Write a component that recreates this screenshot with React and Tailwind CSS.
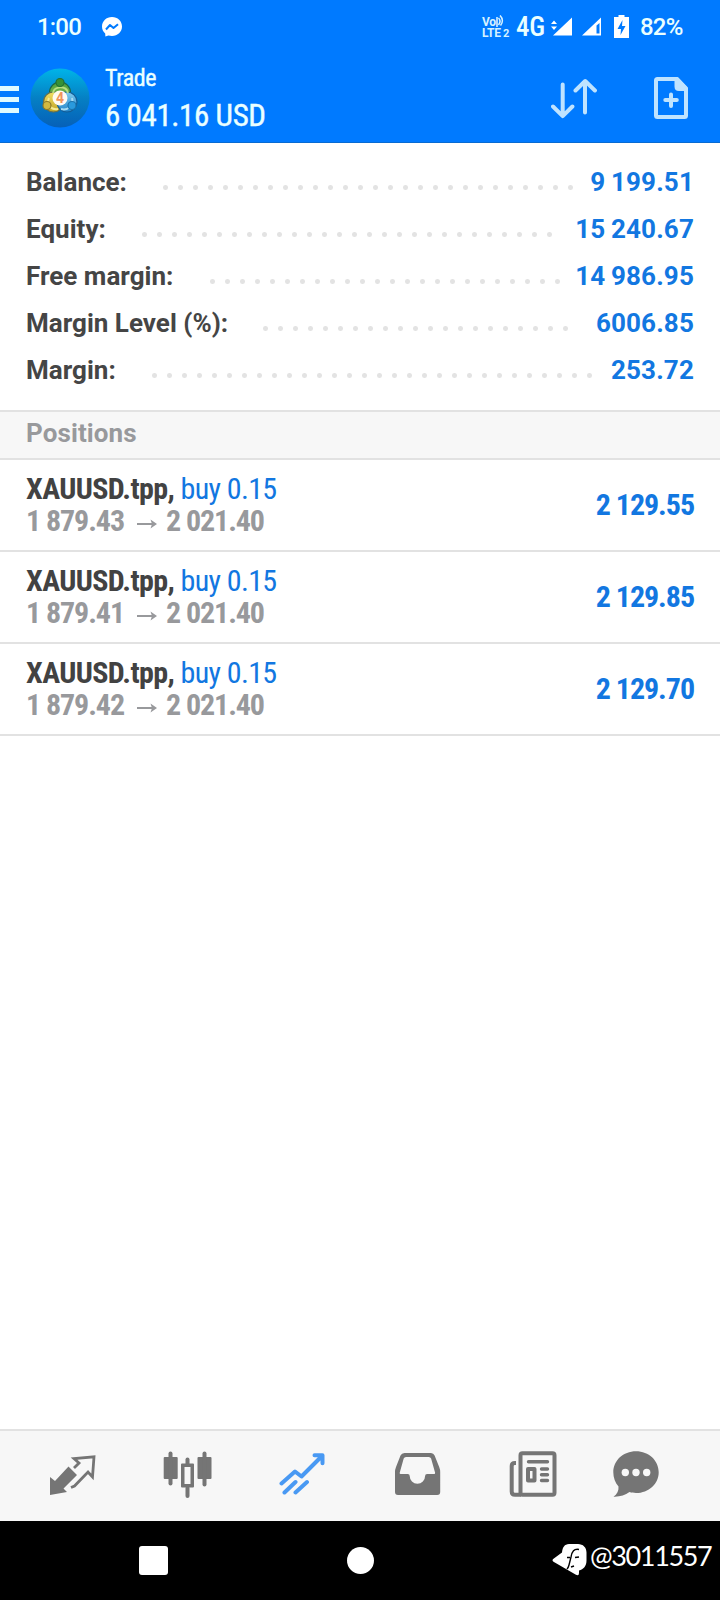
const summary = [
  { label: 'Balance:', value: '9 199.51', start: 'left-[163px]', width: 'w-[410px]' },
  { label: 'Equity:', value: '15 240.67', start: 'left-[142px]', width: 'w-[410px]' },
  { label: 'Free margin:', value: '14 986.95', start: 'left-[210px]', width: 'w-[350px]' },
  { label: 'Margin Level (%):', value: '6006.85', start: 'left-[263px]', width: 'w-[305px]' },
  { label: 'Margin:', value: '253.72', start: 'left-[152px]', width: 'w-[440px]' },
];

const positions = [
  { open: '1 879.43', now: '2 021.40', profit: '2 129.55' },
  { open: '1 879.41', now: '2 021.40', profit: '2 129.85' },
  { open: '1 879.42', now: '2 021.40', profit: '2 129.70' },
];

function StatusBar() {
  return (
    <div className="flex h-[54px] items-center pl-[37px] text-[24px] leading-none text-[#eaffff]">
      <span className="w-[65px] font-medium tracking-[-0.8px]">1:00</span>
      <svg className="h-[20px] w-[20px]" viewBox="0 0 20 20">
        <path d="M10 0C4.3 0 0 4.1 0 9.6c0 2.9 1.2 5.2 3.2 7l.2 3 3-1.2c1.1.3 2.300.5 3.600.5 5.700 0 10-4 10-9.400S15.700 0 10 0Z" fill="#fff" />
        <path d="M4 12.500 8 8l3.500 3L16 7.200" fill="none" stroke="#007aff" strokeWidth="2" strokeLinejoin="round" />
      </svg>
      <div className="ml-[360px] flex h-[24px] w-[28px] flex-col text-[#d5f2ff]">
        <div className="flex h-[13px] items-start">
          <span className="w-[14px] pt-[1px] text-[12px] font-bold leading-[12px] tracking-[-0.3px]">Vo</span>
          <svg className="h-[12px] w-[8px]" viewBox="0 0 8 12" fill="none" stroke="currentColor" strokeWidth="1.600">
            <path d="M1 2v10M2.500 3c2 2 2 4.500 0 7M4 0.500c3 3 3 7 .5 10" />
          </svg>
        </div>
        <div className="flex h-[11px] items-center whitespace-nowrap font-bold leading-[11px]">
          <span className="w-[21px] text-[12px] tracking-[-0.2px]">LTE</span>
          <span className="text-[11px]">2</span>
        </div>
      </div>
      <span className="ml-[6px] w-[34px] text-[27px] font-medium tracking-[-0.3px] font-stretch-75%">4G</span>
      <svg className="ml-px h-[24px] w-[112px]" viewBox="551 15 112 24" fill="#fff">
        <path d="M554 20.500l3 3.500h-6zM554 30l3-3.500h-6zM572 17.500v18h-19z" />
        <path fillRule="evenodd" d="M601 17.500v18h-19zM599.500 23v10.500h-3V25.500z" />
        <path d="M618.500 14h6v3h4.500v21h-15V17h4.500z" />
        <path d="M622.500 20l-5 9h3.500l-.5 6 5-9H622z" fill="#007aff" />
      </svg>
      <span className="absolute left-[640px] font-medium tracking-[-0.8px]">82%</span>
    </div>
  );
}

function Logo() {
  return (
    <svg className="h-[60px] w-[60px]" viewBox="0 0 60 60">
      <defs>
        <linearGradient id="disc" x2="0" y2="1"><stop stopColor="#00b4e8" /><stop offset=".5" stopColor="#0580c4" /><stop offset="1" stopColor="#0660b8" /></linearGradient>
        <linearGradient id="green" x2="0" y2="1"><stop stopColor="#4b9c36" /><stop offset="1" stopColor="#91ca62" /></linearGradient>
        <linearGradient id="yellow" x2="0" y2="1"><stop stopColor="#f1de64" /><stop offset="1" stopColor="#c2a527" /></linearGradient>
        <linearGradient id="blue" x2="0" y2="1"><stop stopColor="#80ccef" /><stop offset="1" stopColor="#2485ca" /></linearGradient>
      </defs>
      <circle cx="30" cy="30" r="29.500" fill="url(#disc)" />
      <g strokeWidth="1.200">
        <circle cx="30" cy="24.500" r="10.500" fill="url(#green)" stroke="#1d6544" />
        <circle cx="23.500" cy="34" r="10" fill="url(#yellow)" stroke="#6c7048" />
        <circle cx="37" cy="34" r="10" fill="url(#blue)" stroke="#145c96" />
        <path d="M23 25c1-7 13-8 15 0" fill="none" stroke="#b7df82" strokeWidth="2" />
        <path d="M19 30c-3 7 2 12 9 11" fill="none" stroke="#f5eb96" strokeWidth="2" />
        <path d="M31 41c7 2 13-4 11-11" fill="none" stroke="#a8dbf2" strokeWidth="2" />
        <circle cx="30" cy="14.500" r="4" fill="#369137" stroke="#237034" />
        <circle cx="17" cy="37.500" r="4" fill="#d2b840" stroke="#8d7a29" />
        <circle cx="42" cy="37.500" r="4" fill="#2a9add" stroke="#1b73ac" />
      </g>
      <circle cx="30" cy="30" r="7.500" fill="#fffaf2" />
      <text x="30" y="35" textAnchor="middle" fontSize="14" fontWeight="700" fill="#ef955b">4</text>
    </svg>
  );
}

function Header() {
  return (
    <header className="relative h-[143px] border-b border-[#086bd2] bg-[#007aff]">
      <StatusBar />
      <div className="flex h-[88px] items-start text-[#eaffff]">
        <div className="mt-[32px] flex w-[30px] flex-col gap-[6px]">
          {[0, 1, 2].map((i) => <span key={i} className="h-[5px] w-[19px] bg-[#dffaff]" />)}
        </div>
        <div className="mt-[14px] w-[75px]"><Logo /></div>
        <div className="flex w-[446px] flex-col whitespace-nowrap font-stretch-75%">
          <span className="mt-[10px] text-[24px] leading-[28px] tracking-[-0.4px] [-webkit-text-stroke:0.4px_#eaffff]">Trade</span>
          <span className="mt-[6px] text-[31px] leading-[36px] tracking-[-0.4px] [-webkit-text-stroke:0.4px_#eaffff]">6 041.16 USD</span>
        </div>
        <svg className="mt-[24px] h-[42px] w-[46px]" viewBox="551 77 46 42" fill="none" stroke="#bfe3ff" strokeWidth="4" strokeLinecap="round" strokeLinejoin="round">
          <path d="M562.700 83.500v31.500M553 105.500l9.700 9.700 9.700-9.700M585 111.500V80.500M575.500 89.500l9.700-9.500 9.700 9.500" />
        </svg>
        <svg className="ml-[57px] mt-[23px] h-[42px] w-[36px]" viewBox="654 77 36 42" fill="none" stroke="#bfe3ff" strokeWidth="4" strokeLinecap="round" strokeLinejoin="round">
          <path d="M657.500 79H677l9 9.500V115.500Q686 117 684.500 117H657.500Q656 117 656 115.500V80.500Q656 79 657.500 79Z" />
          <path d="M676.500 79v7.500q0 2.500 2.500 2.500h7z" fill="#bfe3ff" />
          <path d="M671 94.500v11.500M665.300 100h11.500" strokeWidth="4" />
        </svg>
      </div>
    </header>
  );
}

function Summary() {
  return (
    <section className="h-[267px] pt-[16px] text-[26px] font-bold">
      {summary.map((row) => (
        <div key={row.label} className="relative flex h-[47px] items-center justify-between px-[26px]">
          <span className="tracking-[0.02px] text-[#454545]">{row.label}</span>
          <span className={`absolute top-[26px] h-[5px] bg-[radial-gradient(circle_at_2.5px_2.5px,#e3e3e3_2px,transparent_3px)] bg-[length:15px_5px] bg-repeat-x ${row.start} ${row.width}`} />
          <span className="tracking-[0.15px] text-[#1277e1] [word-spacing:-1px]">{row.value}</span>
        </div>
      ))}
    </section>
  );
}

function PositionRow({ row }) {
  return (
    <div className="flex h-[92px] items-center justify-between border-b-2 border-[#e2e2e2] px-[26px] text-[30px] font-bold font-stretch-75%">
      <div className="flex flex-col leading-[32px]">
        <div className="tracking-[-0.62px] text-[#424242]">XAUUSD.tpp, <span className="font-normal text-[#1277e1]">buy 0.15</span></div>
        <div className="flex text-[#98999c]">
          <span className="tracking-[-1.08px]">{row.open}</span>
          <svg className="ml-[13px] mr-[9px] mt-[14px] h-[10px] w-[20px]" viewBox="0 0 20 10" fill="none" stroke="currentColor" strokeWidth="2"><path d="M0 5h17" /><path d="M13.500 0.500 20 5l-6.500 4.500L15 5z" fill="currentColor" stroke="none" /></svg>
          <span className="tracking-[-1.08px]">{row.now}</span>
        </div>
      </div>
      <span className="pb-[2px] tracking-[-1.05px] text-[#1277e1]">{row.profit}</span>
    </div>
  );
}

function TabBar() {
  return (
    <nav className="flex h-[92px] items-start border-t-2 border-[#e2e2e2] bg-[#f7f7f7] pl-[49px] pt-[20px]">
      <svg className="h-[46px] w-[48px]" viewBox="49 1451 48 46">
        <path d="M68.500 1466.500 77 1475l-13.500 13.500 3.500 3.500L50 1495v-18l5 4z" fill="#757575" />
        <path d="M71 1487.500l3.500-1.500 13.500-14 4.500 5L94 1456.800 74 1458.500l5 4.500-5 5" fill="none" stroke="#757575" strokeWidth="2.800" />
      </svg>
      <svg className="ml-[66px] h-[48px] w-[50px]" viewBox="163 1451 50 48" fill="#757575">
        <rect x="163.700" y="1457" width="14" height="22" rx="1" /><rect x="168.500" y="1451.500" width="4" height="34" rx="2" />
        <rect x="197.500" y="1457" width="14" height="22" rx="1" /><rect x="202.500" y="1451.500" width="4" height="35" rx="2" />
        <path fillRule="evenodd" d="M182 1463.500h11q1 0 1 1v22q0 1-1 1h-11q-1 0-1-1v-22q0-1 1-1Zm2.500 3.500v17h6v-17z" />
        <rect x="185.500" y="1457.500" width="4" height="8" rx="2" /><rect x="185.500" y="1486" width="4" height="12" rx="2" />
      </svg>
      <svg className="ml-[66px] h-[46px] w-[48px]" viewBox="279 1451 48 46" fill="none" stroke="#4999f3" strokeWidth="4" strokeLinecap="round" strokeLinejoin="round">
        <path d="M281.500 1483.500 295 1471.500l6.500 5L322 1456M314.500 1455.300h8v8M284.500 1492.500l11-10.500M295.500 1492.500l11.500-10.500" />
      </svg>
      <svg className="ml-[68px] h-[46px] w-[46px]" viewBox="395 1451 46 46" fill="#757575">
        <path fillRule="evenodd" d="M404.500 1453h26.500q2.500 0 3.600 2.500l4.600 11.500q1 2.500 1 5V1492q0 3-3 3H398q-3 0-3-3v-20q0-2.500 1-5l4.500-11.500q1.200-2.500 4-2.500Zm1.500 4q-1.700 0-2.300 1.500l-4 14.300q-.3 1.200 1 1.200h7q2 0 2 2a7.700 7.700 0 0 0 15.400 0q0-2 2-2h7q1.300 0 1-1.200l-4-14.300q-.7-1.500-2.300-1.500z" />
      </svg>
      <svg className="ml-[68px] h-[48px] w-[48px]" viewBox="509 1451 48 48" fill="none" stroke="#757575" strokeWidth="4">
        <rect x="520.500" y="1453.300" width="34" height="41.500" rx="2" />
        <path d="M516 1463h-1q-3.300 0-3.300 3v25.500q0 3.300 3.300 3.300h6" strokeLinejoin="round" />
        <g strokeWidth="3.400" strokeLinecap="round"><path d="M528.500 1461.700h19M541.500 1469h6M541.500 1474.700h6M541.500 1480.500h6" /></g>
        <rect x="528" y="1469" width="6.500" height="11.500" strokeLinejoin="round" />
      </svg>
      <svg className="ml-[56px] h-[48px] w-[46px]" viewBox="613 1451 46 48">
        <path d="M636 1451.300c12.800 0 22.700 9.300 22.700 20.900S648.800 1493 636 1493c-2.300 0-4.500-.2-6.500-.9-4.500 3.400-9.500 4.800-16 4.600 3.600-2.600 5.400-5.800 5-10.200-3.300-3.900-5.200-8.800-5.200-14.300 0-11.600 9.900-20.900 22.700-20.900Z" fill="#757575" />
        <g fill="#f7f7f7"><circle cx="625.300" cy="1472.500" r="3.700" /><circle cx="636" cy="1472.500" r="3.700" /><circle cx="646.700" cy="1472.500" r="3.700" /></g>
      </svg>
    </nav>
  );
}

function SystemNav() {
  return (
    <div className="flex h-[79px] items-start bg-black pl-[139px] pt-[17px]">
      <span className="mt-[8px] h-[29px] w-[29px] rounded-[3px] bg-white" />
      <span className="ml-[179px] mt-[9px] h-[27px] w-[27px] rounded-full bg-white" />
      <svg className="ml-[178px] mt-[5px] h-[34px] w-[36px]" viewBox="552 1543 36 34">
        <path d="M569 1544h9c5 0 8.500 3.500 8.500 8.500v8c0 5.500-3 9-7.500 10v2.500q0 3.500-3.500 1.500l-22-12.800q-2-1.500 0-3l8.500-6.200c.5-5 2.500-8.500 7-8.500Z" fill="#fff" />
        <path d="M579 1549.500c-5-1-7 2-8 7.500l-2 8c-.5 2-1 3-2 4M567 1557.500h3M575 1557.500l4-.5M571 1567l3-1" fill="none" stroke="#000" strokeWidth="1.400" />
      </svg>
      <span className="ml-[2px] mt-[2px] whitespace-nowrap font-['Lato',sans-serif] text-[27px] leading-[32px] tracking-[-1.350px] text-white">@3011557</span>
    </div>
  );
}

export default function App() {
  return (
    <main className="flex h-[1600px] w-[720px] flex-col overflow-hidden bg-white font-['Roboto',sans-serif]">
      <Header />
      <Summary />
      <section>
        <h2 className="flex h-[50px] items-center border-y-2 border-[#e2e2e2] bg-[#f7f7f7] px-[26px] pb-[4px] text-[26px] font-bold tracking-[0.1px] text-[#98999c]">Positions</h2>
        {positions.map((row) => <PositionRow key={row.open} row={row} />)}
      </section>
      <div className="grow" />
      <TabBar />
      <SystemNav />
    </main>
  );
}
